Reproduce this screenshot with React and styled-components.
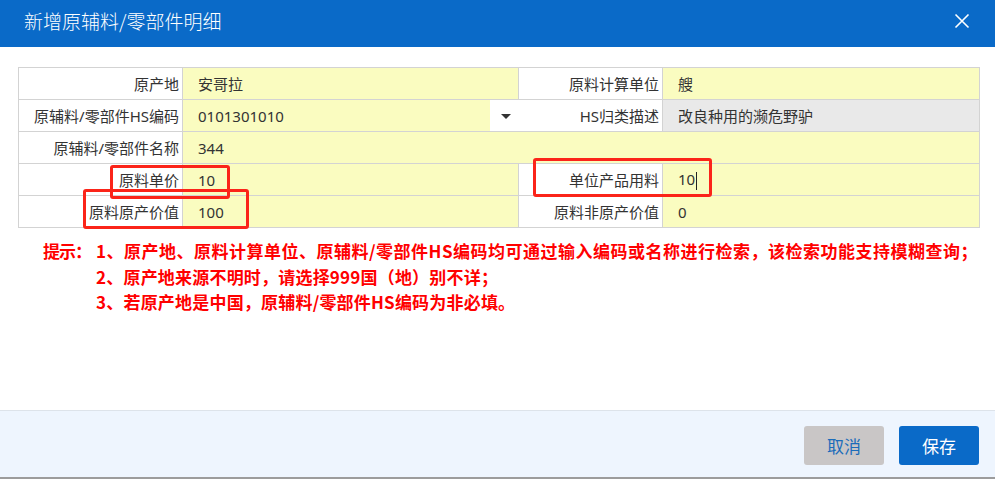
import styled, {createGlobalStyle} from "styled-components";

const GlobalStyle = createGlobalStyle`
    html, body {
        margin: 0;
        padding: 0;
        background: #fff;
        font-family: "Noto Sans", "Noto Sans CJK SC", sans-serif;
    }
`

const rows = [
    [
        {label: "原产地", value: "安哥拉"},
        {label: "原料计算单位", value: "艘"},
    ],
    [
        {label: "原辅料/零部件HS编码", value: "0101301010", select: true},
        {label: "HS归类描述", value: "改良种用的濒危野驴", disabled: true},
    ],
    [
        {label: "原辅料/零部件名称", value: "344", span: 3},
    ],
    [
        {label: "原料单价", value: "10"},
        {label: "单位产品用料", value: "10", caret: true},
    ],
    [
        {label: "原料原产价值", value: "100"},
        {label: "原料非原产价值", value: "0"},
    ],
];

const marks = [
    {left: 92, top: 98, width: 120, height: 34},
    {left: 65, top: 122, width: 166, height: 40},
    {left: 515, top: 91, width: 179, height: 39},
];

export default function App(){
    return (
        <>
            <GlobalStyle/>
            <Dialog>
                <Header>
                    <Title>新增原辅料/零部件明细</Title>
                    <Close aria-label="close">
                        <svg width="16" height="16" viewBox="0 0 16 16">
                            <path d="M1.5 1.5 L14.5 14.5 M14.5 1.5 L1.5 14.5" stroke="#fff" strokeWidth="1.6" fill="none"/>
                        </svg>
                    </Close>
                </Header>
                <Content>
                    <TableWrap>
                        <Table>
                            <colgroup>
                                <col style={{width: 164}}/>
                                <col style={{width: 336}}/>
                                <col style={{width: 144}}/>
                                <col style={{width: 317}}/>
                            </colgroup>
                            <tbody>
                                {rows.map((row, i) => (
                                    <tr key={i}>
                                        {row.map((cell) => [
                                            <Label key={cell.label + "l"}>{cell.label}</Label>,
                                            <Value key={cell.label + "v"} colSpan={cell.span || 1} $disabled={cell.disabled}>
                                                {cell.select ? (
                                                    <SelectBox>
                                                        <span>{cell.value}</span>
                                                        <Arrow/>
                                                    </SelectBox>
                                                ) : (
                                                    <span>{cell.value}{cell.caret && <Caret/>}</span>
                                                )}
                                            </Value>
                                        ])}
                                    </tr>
                                ))}
                            </tbody>
                        </Table>
                        {marks.map((m, i) => (
                            <Mark key={i} style={{left: m.left, top: m.top, width: m.width, height: m.height}}/>
                        ))}
                    </TableWrap>
                    <Tips>
                        <TipHead>提示：</TipHead>
                        <TipList>
                            <p>1、原产地、原料计算单位、原辅料/零部件HS编码均可通过输入编码或名称进行检索，该检索功能支持模糊查询；</p>
                            <p>2、原产地来源不明时，请选择999国（地）别不详；</p>
                            <p>3、若原产地是中国，原辅料/零部件HS编码为非必填。</p>
                        </TipList>
                    </Tips>
                </Content>
                <Footer>
                    <Botao $cancel>取消</Botao>
                    <Botao>保存</Botao>
                </Footer>
            </Dialog>
        </>
    )
}

const Dialog = styled.div`
    width: 995px;
    height: 479px;
    display: flex;
    flex-direction: column;
    border-bottom: 2px solid #9c9c9c;
    box-sizing: border-box;
`

const Header = styled.div`
    height: 47px;
    background-color: #0a6ac8;
    display: flex;
    align-items: center;
    justify-content: space-between;
    padding: 0 25px 0 24px;
    flex-shrink: 0;
`

const Title = styled.h1`
    margin: 0;
    font-family: "Noto Sans CJK SC", sans-serif;
    font-weight: 300;
    font-size: 19px;
    color: #fff;
    position: relative;
    top: -3px;
`

const Close = styled.div`
    display: flex;
    position: relative;
    top: -3px;
`

const Content = styled.div`
    flex: 1;
    padding: 20px 16px 0 18px;
`

const TableWrap = styled.div`
    position: relative;
    width: 961px;
`

const Table = styled.table`
    width: 961px;
    border-collapse: collapse;
    table-layout: fixed;

    td {
        border: 1px solid #d3d3d3;
        height: 31px;
        padding: 0;
        font-size: 15px;
        font-family: "Noto Sans", "Noto Sans CJK SC", sans-serif;
        color: #333;
    }
`

const Label = styled.td`
    text-align: right;
    padding-right: 3px !important;
    background: #fff;
`

const Value = styled.td`
    background: ${(p) => p.$disabled ? "#e9e9e9" : "#fafcc0"};
    padding-left: 15px !important;
`

const SelectBox = styled.div`
    display: flex;
    align-items: center;
    justify-content: space-between;
    height: 31px;
    margin-right: -1px;
`

const Arrow = styled.div`
    width: 29px;
    height: 31px;
    background: #fff;
    position: relative;

    &::after {
        content: "";
        position: absolute;
        left: 11px;
        top: 14px;
        border-left: 5px solid transparent;
        border-right: 5px solid transparent;
        border-top: 5px solid #333;
    }
`

const Caret = styled.span`
    display: inline-block;
    width: 1px;
    height: 18px;
    background: #222;
    vertical-align: middle;
    margin-left: 1px;
`

const Mark = styled.div`
    position: absolute;
    border: 3px solid #fb2419;
    border-radius: 3px;
    box-sizing: border-box;
    pointer-events: none;
`

const Tips = styled.div`
    display: flex;
    margin-top: 10px;
    padding-left: 25px;
    font-family: "Noto Sans CJK SC", sans-serif;
    font-weight: 700;
    font-size: 17px;
    color: #ff0000;
    line-height: 25.5px;
`

const TipHead = styled.div`
    width: 53px;
    flex-shrink: 0;
    letter-spacing: -1px;
`

const TipList = styled.div`
    p {
        margin: 0;
        white-space: nowrap;
        letter-spacing: 0.2px;
    }

    p:first-child {
        letter-spacing: 0.5px;
    }
`

const Footer = styled.div`
    height: 66px;
    background: #eef5fe;
    border-top: 1px solid #dde3ea;
    display: flex;
    align-items: center;
    justify-content: flex-end;
    gap: 15px;
    padding-right: 16px;
    flex-shrink: 0;
`

const Botao = styled.button`
    width: 80px;
    height: 39px;
    border: 0 none;
    border-radius: 3px;
    background-color: ${(p) => p.$cancel ? "#c9c6c6" : "#0a6ac8"};
    color: ${(p) => p.$cancel ? "#1b6cba" : "#fff"};
    font-family: "Noto Sans CJK SC", sans-serif;
    font-size: 17px;
    cursor: pointer;
    margin-top: 2px;
`
